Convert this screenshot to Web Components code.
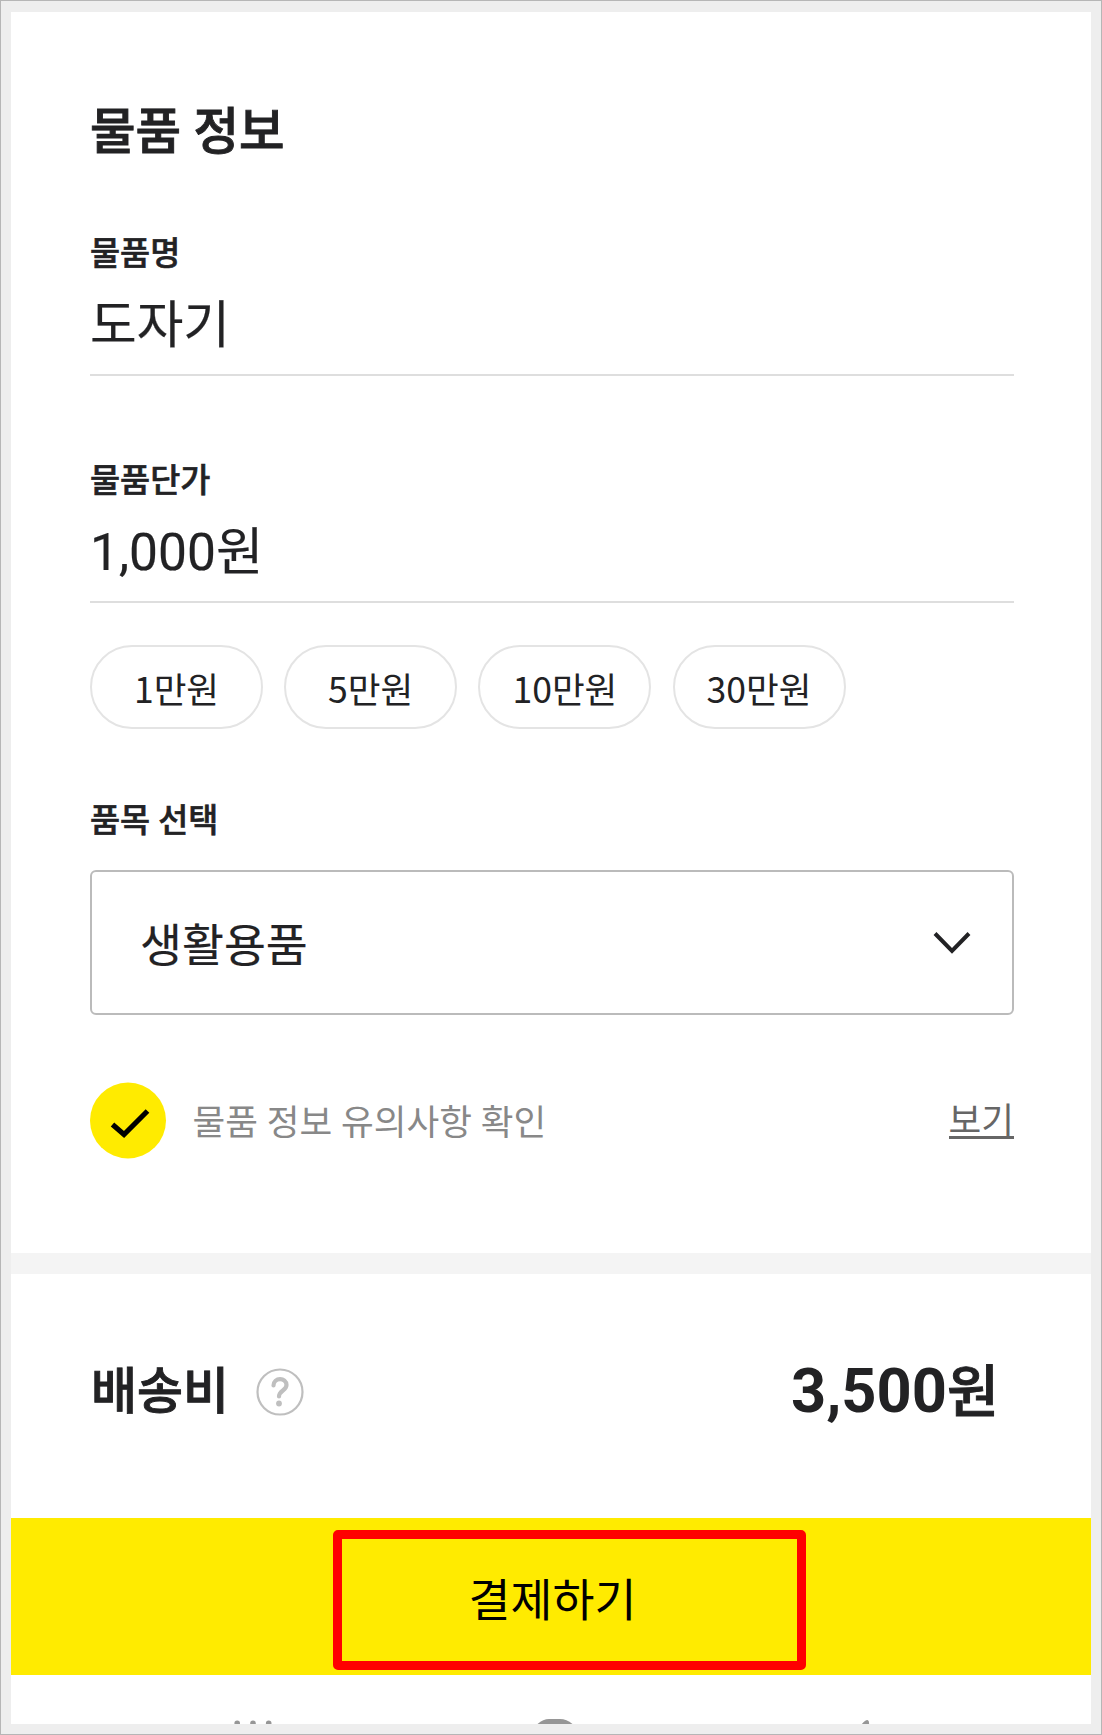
<!DOCTYPE html>
<html lang="ko">
<head>
<meta charset="UTF-8">
<title>물품 정보</title>
<style>
  html, body { margin: 0; padding: 0; }
  body {
    font-family: Roboto, "Noto Sans CJK KR", sans-serif;
    color: #222224;
    background: #fff;
  }
</style>
</head>
<body>
<delivery-page>
  <item-section heading="물품 정보">
    <text-field label="물품명" style="--value-size: 50.7px">도자기</text-field>
    <text-field label="물품단가">1,000원</text-field>
    <price-chips>
      <price-chip>1만원</price-chip>
      <price-chip>5만원</price-chip>
      <price-chip>10만원</price-chip>
      <price-chip>30만원</price-chip>
    </price-chips>
    <select-box label="품목 선택">생활용품</select-box>
    <agree-row action="보기">물품 정보 유의사항 확인</agree-row>
  </item-section>
  <fee-row label="배송비" amount="3,500" unit="원"></fee-row>
  <pay-button>결제하기</pay-button>
  <bottom-nav></bottom-nav>
</delivery-page>

<script>
class DeliveryPage extends HTMLElement {
  connectedCallback() {
    this.attachShadow({ mode: "open" });
    this.shadowRoot.innerHTML = `
      <style>
        :host {
          display: block;
          box-sizing: border-box;
          width: 1102px;
          height: 1735px;
          padding: 11px 10px 10px;
          border: 1px solid #b6b6b6;
          background: #eee;
          overflow: hidden;
        }
        main {
          display: flex;
          flex-direction: column;
          height: 1712px;
          background: #fff;
          overflow: hidden;
        }
      </style>
      <main><slot></slot></main>
    `;
  }
}

class ItemSection extends HTMLElement {
  connectedCallback() {
    this.attachShadow({ mode: "open" });
    this.shadowRoot.innerHTML = `
      <style>
        :host {
          display: block;
          box-sizing: border-box;
          height: 1262px;
          padding: 90px 77px 0 79px;
          border-bottom: 21px solid #f4f4f4;
        }
        h2 {
          margin: 0 0 68px;
          font-size: 49.5px;
          line-height: 60px;
          font-weight: 500;
          -webkit-text-stroke: 0.9px currentColor;
        }
      </style>
      <h2>${this.getAttribute("heading")}</h2>
      <slot></slot>
    `;
  }
}

class TextField extends HTMLElement {
  connectedCallback() {
    this.attachShadow({ mode: "open" });
    this.shadowRoot.innerHTML = `
      <style>
        :host {
          display: block;
          box-sizing: border-box;
          height: 146px;
          margin-bottom: 81px;
          padding-top: 4px;
          border-bottom: 2px solid #dedede;
        }
        .label {
          font-size: 32.7px;
          line-height: 40px;
          font-weight: 500;
          -webkit-text-stroke: 0.6px currentColor;
        }
        .value {
          margin-top: 22px;
          font-size: var(--value-size, 51.5px);
          line-height: 60px;
          -webkit-text-stroke: 0.2px currentColor;
        }
      </style>
      <div class="label">${this.getAttribute("label")}</div>
      <div class="value"><slot></slot></div>
    `;
  }
}

class PriceChips extends HTMLElement {
  connectedCallback() {
    this.attachShadow({ mode: "open" });
    this.shadowRoot.innerHTML = `
      <style>
        :host {
          display: flex;
          gap: 21.2px;
          margin: -39px 0 72px;
        }
      </style>
      <slot></slot>
    `;
  }
}

class PriceChip extends HTMLElement {
  connectedCallback() {
    this.attachShadow({ mode: "open" });
    this.shadowRoot.innerHTML = `
      <style>
        :host {
          display: block;
          box-sizing: border-box;
          width: 173px;
          height: 84px;
          padding-top: 1px;
          border: 2px solid #e4e4e4;
          border-radius: 42px;
          font-family: "Noto Sans CJK KR", sans-serif;
          font-size: 35.6px;
          line-height: 80px;
          text-align: center;
        }
      </style>
      <slot></slot>
    `;
  }
}

class SelectBox extends HTMLElement {
  connectedCallback() {
    this.attachShadow({ mode: "open" });
    this.shadowRoot.innerHTML = `
      <style>
        :host { display: block; }
        .label {
          margin-bottom: 29px;
          font-size: 32.7px;
          line-height: 40px;
          font-weight: 500;
          -webkit-text-stroke: 0.6px currentColor;
        }
        .box {
          display: flex;
          align-items: center;
          justify-content: space-between;
          box-sizing: border-box;
          height: 145px;
          padding: 0 41.5px 0 48px;
          border: 2px solid #bbb;
          border-radius: 6px;
          font-size: 45.6px;
          line-height: 60px;
        }
        .text { padding-top: 9px; -webkit-text-stroke: 0.2px currentColor; }
        svg { display: block; }
      </style>
      <div class="label">${this.getAttribute("label")}</div>
      <div class="box">
        <span class="text"><slot></slot></span>
        <svg width="38" height="24" viewBox="0 0 38 24" fill="none" stroke="#222224" stroke-width="4">
          <path d="M2 2.5 L19 20 L36 2.5"/>
        </svg>
      </div>
    `;
  }
}

class AgreeRow extends HTMLElement {
  connectedCallback() {
    this.attachShadow({ mode: "open" });
    this.shadowRoot.innerHTML = `
      <style>
        :host {
          display: flex;
          align-items: center;
          height: 77px;
          margin-top: 67px;
          font-size: 35.6px;
          line-height: 50px;
          color: #888;
        }
        .text { flex: 1; margin-left: 25.5px; padding-top: 5px; }
        .action {
          height: 38px;
          line-height: 46px;
          margin-bottom: 4px;
          border-bottom: 3px solid #666;
          color: #666;
        }
      </style>
      <svg width="77" height="77" viewBox="0 0 77 77">
        <circle cx="38" cy="38.5" r="38" fill="#ffeb00"/>
        <path d="M22.5 42.5 L34 52.5 L57.5 29" fill="none" stroke="#000" stroke-width="5.2"/>
      </svg>
      <span class="text"><slot></slot></span>
      <span class="action">${this.getAttribute("action")}</span>
    `;
  }
}

class FeeRow extends HTMLElement {
  connectedCallback() {
    this.attachShadow({ mode: "open" });
    this.shadowRoot.innerHTML = `
      <style>
        :host {
          display: flex;
          align-items: center;
          box-sizing: border-box;
          height: 244px;
          padding: 0 92px 8px 80px;
          font-weight: 700;
        }
        .label {
          font-size: 50px;
          line-height: 60px;
          font-weight: 500;
          -webkit-text-stroke: 0.9px currentColor;
        }
        svg { margin: 0 0 0 26.5px; }
        .amount { margin-left: auto; margin-top: -1px; font-size: 61.4px; line-height: 70px; }
        .unit {
          font-size: 56.5px;
          font-weight: 500;
          -webkit-text-stroke: 0.9px currentColor;
        }
      </style>
      <span class="label">${this.getAttribute("label")}</span>
      <svg width="48" height="48" viewBox="0 0 48 48" fill="none" stroke="#bfbfbf">
        <circle cx="24" cy="24" r="22.5" stroke-width="2.2"/>
        <path d="M17.5 17.5 C17.5 9 30.5 9 30.5 17 C30.5 22.5 23 22.5 23 28.5" stroke-width="4.2" stroke-linecap="round"/>
        <circle cx="23" cy="35.5" r="2.9" fill="#bfbfbf" stroke="none"/>
      </svg>
      <span class="amount">${this.getAttribute("amount")}<span class="unit">${this.getAttribute("unit")}</span></span>
    `;
  }
}

class PayButton extends HTMLElement {
  connectedCallback() {
    this.attachShadow({ mode: "open" });
    this.shadowRoot.innerHTML = `
      <style>
        :host {
          display: block;
          box-sizing: border-box;
          position: relative;
          height: 157px;
          padding-left: 3px;
          background: #ffeb00;
          color: #000;
          font-size: 45.6px;
          line-height: 167px;
          text-align: center;
        }
        /* highlight frame laid over the button */
        .mark {
          position: absolute;
          left: 322px;
          top: 12px;
          box-sizing: border-box;
          width: 473px;
          height: 140px;
          border: 9px solid #f00;
          border-radius: 5px;
        }
      </style>
      <slot></slot>
      <div class="mark"></div>
    `;
  }
}

class BottomNav extends HTMLElement {
  connectedCallback() {
    this.attachShadow({ mode: "open" });
    this.shadowRoot.innerHTML = `
      <style>
        :host { display: block; height: 49px; overflow: hidden; }
        svg { display: block; }
      </style>
      <svg width="1080" height="49" viewBox="0 0 1080 49" fill="#969696">
        <circle cx="226.2" cy="48.3" r="2.8"/>
        <circle cx="242" cy="48.3" r="2.8"/>
        <circle cx="257.7" cy="48.3" r="2.8"/>
        <path d="M526 49.5 Q532 44 538 44 H549 Q556 44 562 49.5 Z"/>
        <path d="M850.5 49.5 Q854 45 856.5 45 Q858.5 45.5 858 49.5 Z"/>
      </svg>
    `;
  }
}

customElements.define("delivery-page", DeliveryPage);
customElements.define("item-section", ItemSection);
customElements.define("text-field", TextField);
customElements.define("price-chips", PriceChips);
customElements.define("price-chip", PriceChip);
customElements.define("select-box", SelectBox);
customElements.define("agree-row", AgreeRow);
customElements.define("fee-row", FeeRow);
customElements.define("pay-button", PayButton);
customElements.define("bottom-nav", BottomNav);
</script>
</body>
</html>
